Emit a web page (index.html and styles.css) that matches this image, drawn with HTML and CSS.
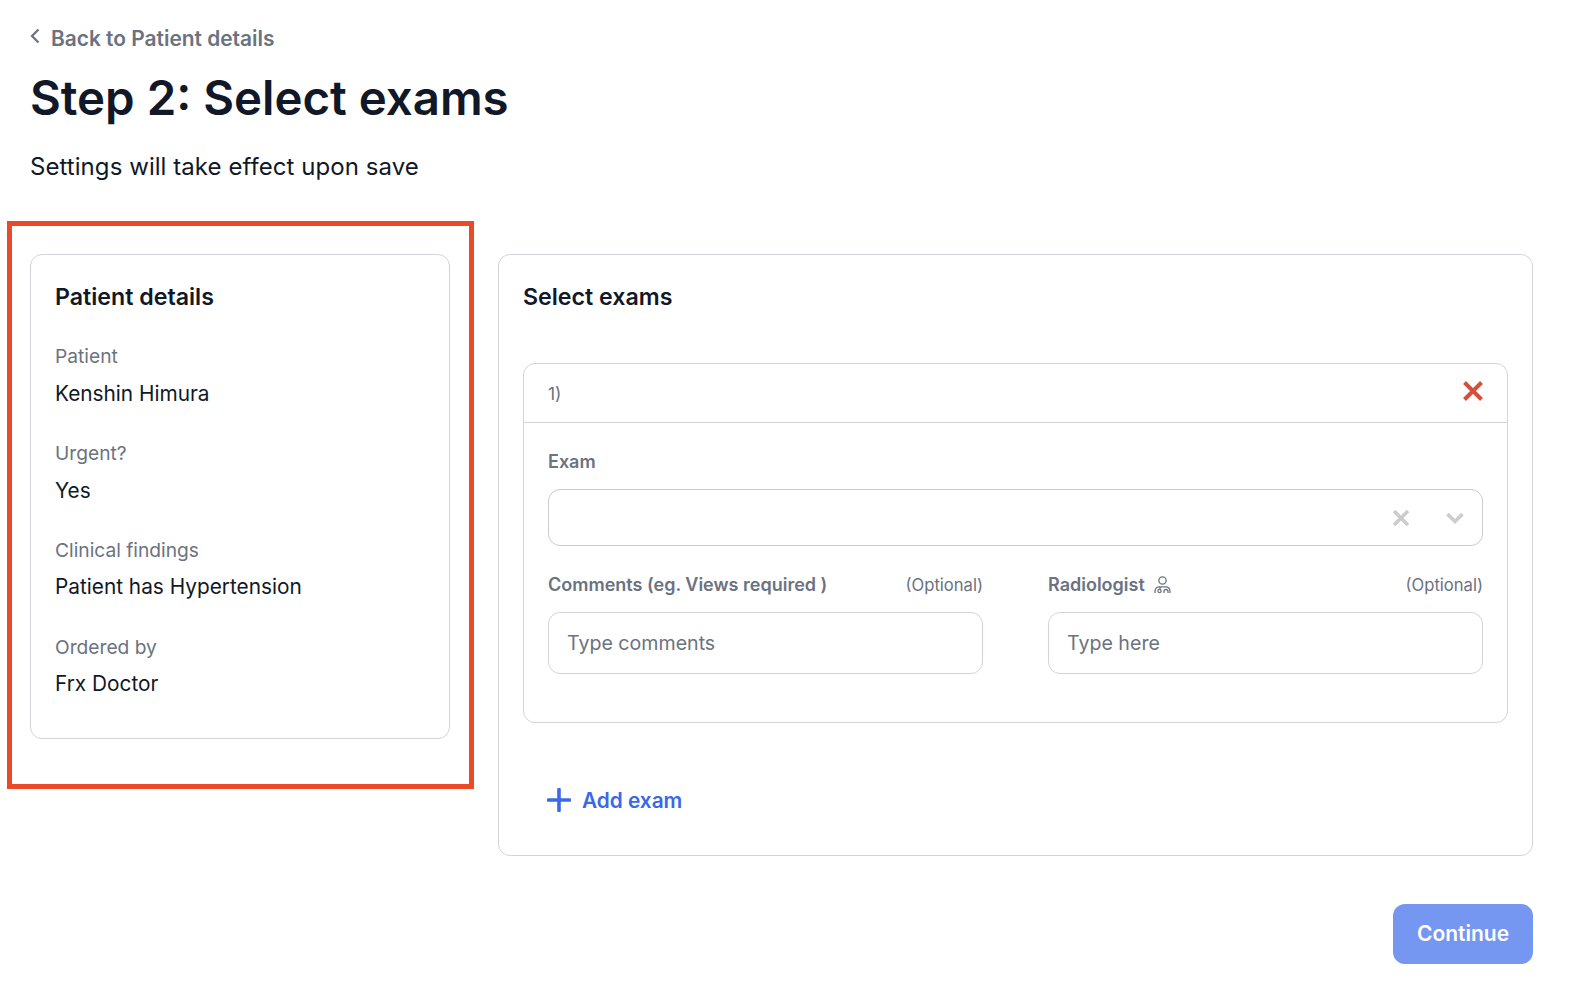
FILE: index.html
```html
<!DOCTYPE html>
<html lang="en">
<head>
  <meta charset="UTF-8">
  <title>Step 2: Select exams</title>
  <link rel="stylesheet" href="styles.css">
</head>
<body>

<div class="page">
  <a class="back-link" href="#">
    <svg class="back-icon" width="10" height="16" viewBox="0 0 10 16"><path d="M8.500 1.500 2 8l6.500 6.500" fill="none" stroke="#6b7280" stroke-width="2.200"/></svg>
    <span>Back to Patient details</span>
  </a>
  <h1>Step 2: Select exams</h1>
  <p class="subtitle">Settings will take effect upon save</p>

  <div class="columns">
    <section class="card patient-card">
      <div class="highlight"></div>
      <h2>Patient details</h2>
      <div class="detail">
        <div class="detail-label">Patient</div>
        <div class="detail-value">Kenshin Himura</div>
      </div>
      <div class="detail">
        <div class="detail-label">Urgent?</div>
        <div class="detail-value">Yes</div>
      </div>
      <div class="detail">
        <div class="detail-label">Clinical findings</div>
        <div class="detail-value">Patient has Hypertension</div>
      </div>
      <div class="detail">
        <div class="detail-label">Ordered by</div>
        <div class="detail-value">Frx Doctor</div>
      </div>
    </section>

    <div class="right-column">
      <section class="card exams-card">
        <h2>Select exams</h2>

        <div class="exam">
          <div class="exam-head">
            <span class="exam-number">1)</span>
            <svg class="exam-remove" width="20" height="20" viewBox="0 0 20 20"><path d="M1.500 1.500l17 17M18.500 1.500l-17 17" fill="none" stroke="#d4503a" stroke-width="4"/></svg>
          </div>
          <div class="exam-body">
            <label class="field-label">Exam</label>
            <div class="select">
              <svg class="select-clear" width="16" height="16" viewBox="0 0 16 16"><path d="M1 1l14 14M15 1 1 15" fill="none" stroke="#cccccc" stroke-width="3.600"/></svg>
              <svg class="select-arrow" width="18" height="12" viewBox="0 0 18 12"><path d="M1.500 2l7.500 7.500L16.500 2" fill="none" stroke="#cccccc" stroke-width="3.600"/></svg>
            </div>
            <div class="field-row">
              <div class="field">
                <div class="field-head">
                  <label class="field-label">Comments (eg. Views required )</label>
                  <span class="optional">(Optional)</span>
                </div>
                <input class="text-input" type="text" placeholder="Type comments">
              </div>
              <div class="field">
                <div class="field-head">
                  <label class="field-label">Radiologist
                    <svg class="doctor-icon" width="17" height="18" viewBox="0 0 17 18" fill="none" stroke="#6b7280" stroke-width="1.300">
                      <circle cx="8.500" cy="4.500" r="3.700"/>
                      <path d="M1 17v-1.500C1 12.500 3 10.800 5.500 10.800h6c2.500 0 4.500 1.700 4.500 4.700V17"/>
                      <circle cx="5.500" cy="15" r="1.600"/>
                      <path d="M10 17v-1.500a2 2 0 0 1 4 0V17M6 10.800v2.600"/>
                    </svg>
                  </label>
                  <span class="optional">(Optional)</span>
                </div>
                <input class="text-input" type="text" placeholder="Type here">
              </div>
            </div>
          </div>
        </div>

        <a class="add-exam" href="#">
          <svg width="24" height="24" viewBox="0 0 24 24"><path d="M12 1.500v21M1.500 12h21" fill="none" stroke="#3b68e8" stroke-width="3.600" stroke-linecap="round"/></svg>
          <span>Add exam</span>
        </a>
      </section>

      <div class="actions">
        <button class="continue">Continue</button>
      </div>
    </div>
  </div>
</div>

</body>
</html>
```

FILE: styles.css
```css
body {
  margin: 0;
  background-color: #fff;
  font-family: "Inter", "Liberation Sans", sans-serif;
  color: #111827;
}

.page {
  padding: 24px 47px 0 30px;
}

.back-link {
  display: flex;
  align-items: center;
  gap: 11px;
  height: 28px;
  color: #6b7280;
  font-size: 20.900px;
  font-weight: 600;
  text-decoration: none;
}

.back-icon {
  margin-top: -4px;
}

h1 {
  margin: 16px 0 0;
  font-size: 47.400px;
  line-height: 60px;
  font-weight: 600;
  color: #111827;
}

.subtitle {
  margin: 23px 0 0;
  font-size: 24px;
  line-height: 32px;
  letter-spacing: 0.060px;
}

.columns {
  display: flex;
  align-items: flex-start;
  gap: 48px;
  margin-top: 71px;
}

.card {
  background-color: #fff;
  border: 1px solid #d1d5db;
  border-radius: 12px;
  box-sizing: border-box;
  padding: 26px 24px;
}

.card h2 {
  margin: 0;
  font-size: 23.200px;
  line-height: 32px;
  font-weight: 600;
}

.patient-card {
  position: relative;
  width: 420px;
  height: 485px;
  flex-shrink: 0;
}

.highlight {
  position: absolute;
  top: -34px;
  right: -25px;
  bottom: -51px;
  left: -24px;
  border: 5px solid #ea4a28;
  pointer-events: none;
}

.detail {
  margin-top: 29.250px;
}

.detail:first-of-type {
  margin-top: 38px;
}

.detail-label {
  font-size: 19.200px;
  line-height: 28px;
  color: #6b7280;
}

.detail-value {
  margin-top: 7.500px;
  font-size: 20.800px;
  line-height: 32px;
  color: #111827;
}

.right-column {
  flex: 1;
}

.exams-card {
  height: 602px;
}

.exam {
  margin-top: 50px;
  border: 1px solid #d1d5db;
  border-radius: 12px;
}

.exam-head {
  display: flex;
  justify-content: space-between;
  align-items: center;
  height: 58px;
  padding: 0 24px;
  border-bottom: 1px solid #d1d5db;
}

.exam-number {
  font-size: 17.500px;
  color: #6b7280;
}

.exam-remove {
  margin-top: -4px;
}

.exam-body {
  padding: 27px 24px 48px;
}

.field-label {
  font-size: 18px;
  line-height: 24px;
  font-weight: 600;
  color: #6b7280;
  display: flex;
  align-items: center;
  gap: 9px;
}

.select {
  display: flex;
  align-items: center;
  justify-content: flex-end;
  height: 57px;
  margin-top: 15px;
  padding-right: 18px;
  border: 1px solid #cccccc;
  border-radius: 12px;
  box-sizing: border-box;
}

.select-clear {
  margin-right: 37px;
}

.field-row {
  display: grid;
  grid-template-columns: 1fr 1fr;
  gap: 65px;
  margin-top: 27px;
}

.field-head {
  display: flex;
  justify-content: space-between;
  align-items: center;
  height: 24px;
  margin-bottom: 15px;
}

.optional {
  font-size: 16.600px;
  color: #6b7280;
}

.text-input {
  display: block;
  width: 100%;
  height: 62px;
  box-sizing: border-box;
  padding: 0 18px;
  border: 1px solid #d1d5db;
  border-radius: 12px;
  font-family: inherit;
  font-size: 19.600px;
  outline: none;
}

.text-input::placeholder {
  color: #6b7280;
  opacity: 1;
}

.add-exam {
  display: flex;
  align-items: center;
  gap: 11px;
  margin-top: 65px;
  margin-left: 24px;
  width: fit-content;
  color: #3b68e8;
  font-size: 20.800px;
  font-weight: 600;
  text-decoration: none;
}

.add-exam svg {
  margin-top: -2px;
}

.actions {
  display: flex;
  justify-content: flex-end;
  margin-top: 48px;
}

.continue {
  width: 140px;
  height: 60px;
  padding-bottom: 2px;
  border: none;
  border-radius: 12px;
  background-color: #7597f2;
  color: #fff;
  font-family: inherit;
  font-size: 21px;
  font-weight: 600;
}
```
